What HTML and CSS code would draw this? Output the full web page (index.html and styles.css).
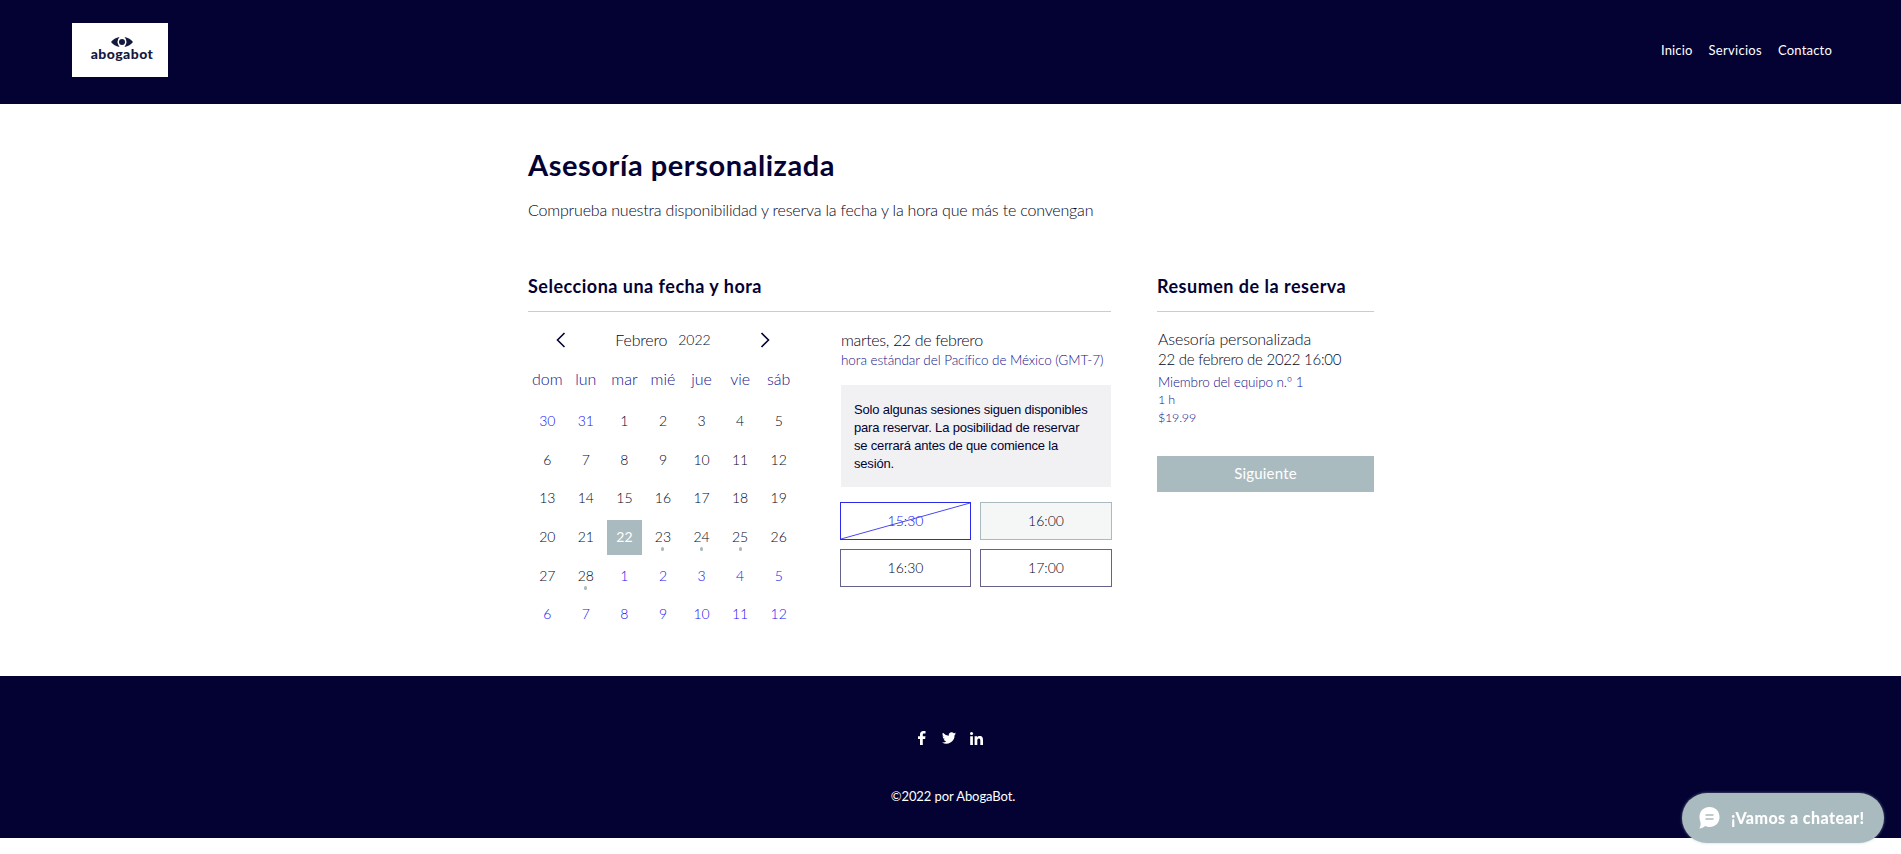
FILE: index.html
```html
<!DOCTYPE html>
<html lang="es">
<head>
<meta charset="utf-8">
<title>Asesoría personalizada</title>
<link rel="stylesheet" href="styles.css">
</head>
<body>
<header class="header">
  <a class="logo">
    <svg class="eye" viewBox="0 0 22 10" width="22" height="10"><path d="M0 5Q3 1 8.500 0Q4.500 4.500 8.500 10Q3 9 0 5ZM22 5Q19 1 13.500 0Q17.500 4.500 13.500 10Q19 9 22 5Z"/><circle cx="11" cy="5" r="3"/></svg>
    <span class="logo-text">abogabot</span>
  </a>
  <nav class="nav"><a class="nav-home">Inicio</a><a class="nav-services">Servicios</a><a class="nav-contact">Contacto</a></nav>
</header>
<main class="main">
  <h1>Asesoría personalizada</h1>
  <p class="sub">Comprueba nuestra disponibilidad y reserva la fecha y la hora que más te convengan</p>
  <div class="columns">
    <section class="picker">
      <h2>Selecciona una fecha y hora</h2>
      <div class="picker-body">
        <div class="calendar">
          <div class="month">
            <svg width="10" height="16" viewBox="0 0 10 16"><path d="M8.500 1L1.500 8L8.500 15"/></svg>
            <div class="label"><span>Febrero</span><span class="year">2022</span></div>
            <svg width="10" height="16" viewBox="0 0 10 16"><path d="M1.500 1L8.500 8L1.500 15"/></svg>
          </div>
          <div class="week"><span>dom</span><span>lun</span><span>mar</span><span>mié</span><span>jue</span><span>vie</span><span>sáb</span></div>
          <div class="days">
            <span class="out">30</span><span class="out">31</span><span>1</span><span>2</span><span>3</span><span>4</span><span>5</span>
            <span>6</span><span>7</span><span>8</span><span>9</span><span>10</span><span>11</span><span>12</span>
            <span>13</span><span>14</span><span>15</span><span>16</span><span>17</span><span>18</span><span>19</span>
            <span>20</span><span>21</span><span><b>22</b></span><span class="dot">23</span><span class="dot">24</span><span class="dot">25</span><span>26</span>
            <span>27</span><span class="dot">28</span><span class="out">1</span><span class="out">2</span><span class="out">3</span><span class="out">4</span><span class="out">5</span>
            <span class="out">6</span><span class="out">7</span><span class="out">8</span><span class="out">9</span><span class="out">10</span><span class="out">11</span><span class="out">12</span>
          </div>
        </div>
        <div class="times">
          <p class="date">martes, 22 de febrero</p>
          <p class="zone">hora estándar del Pacífico de México (GMT-7)</p>
          <div class="notice">Solo algunas sesiones siguen disponibles<br>para reservar. La posibilidad de reservar<br>se cerrará antes de que comience la<br>sesión.</div>
          <div class="slots">
            <div class="slot taken"><svg viewBox="0 0 129 36" preserveAspectRatio="none"><path d="M0 36L129 0"/></svg><span>15:30</span></div>
            <div class="slot chosen"><span>16:00</span></div>
            <div class="slot"><span>16:30</span></div>
            <div class="slot"><span>17:00</span></div>
          </div>
        </div>
      </div>
    </section>
    <aside class="summary">
      <h2>Resumen de la reserva</h2>
      <p class="big">Asesoría personalizada</p>
      <p class="big when">22 de febrero de 2022 16:00</p>
      <p class="small first">Miembro del equipo n.º 1</p>
      <p class="small numeric">1 h</p>
      <p class="small numeric">$19.99</p>
      <button class="next">Siguiente</button>
    </aside>
  </div>
</main>
<footer class="footer">
  <div class="social">
    <svg width="8" height="14" viewBox="0 0 8 14"><path d="M2 14V8H0V5.300H2V3.500C2 1.200 3.300 0 5.400 0H7.500V2.500H6C5 2.500 4.800 3 4.800 3.700V5.300H7.500L7.100 8H4.800V14Z"/></svg>
    <svg class="twitter" width="14" height="12" viewBox="0 0 24 20"><path d="M24 2.400a9.800 9.800 0 0 1-2.800.8A4.900 4.900 0 0 0 23.300.5a9.900 9.900 0 0 1-3.100 1.200A4.900 4.900 0 0 0 11.800 6.200 14 14 0 0 1 1.700 1a4.900 4.900 0 0 0 1.500 6.600A4.900 4.900 0 0 1 1 7v.1a4.900 4.900 0 0 0 4 4.800 5 5 0 0 1-2.200.1 4.900 4.900 0 0 0 4.600 3.400A9.900 9.900 0 0 1 0 17.500 14 14 0 0 0 21.500 5.100 10 10 0 0 0 24 2.400Z"/></svg>
    <svg width="13" height="13" viewBox="0 0 13 13"><path d="M.2 4.300H2.900V13H.2ZM4.600 4.300H7.200V5.500C7.700 4.600 8.600 4.100 9.800 4.100 12.500 4.100 13 5.900 13 8.200V13H10.300V8.700C10.300 7.600 10.200 6.400 8.900 6.400S7.300 7.500 7.300 8.700V13H4.600Z"/><circle cx="1.550" cy="1.550" r="1.550"/></svg>
  </div>
  <p class="copy">©2022 por AbogaBot.</p>
</footer>
<div class="chat">
  <svg width="21" height="22" viewBox="0 0 21 22"><path class="bubble" d="M10.500 0C16.500 0 20.500 4.300 20.500 10S16.500 20 10.500 20C9 20 7.500 19.700 6.200 19C4.500 20.500 2.500 21.500.3 21.500C1.300 20 1.800 18 1.500 15.500C.8 13.800.5 12 .5 10C.5 4.300 4.500 0 10.500 0Z"/><path class="lines" d="M6.500 8H14.500M6.500 12H14.500"/></svg>
  <span>¡Vamos a chatear!</span>
</div>
</body>
</html>
```
FILE: styles.css
```css
* { box-sizing: border-box; }
body { margin: 0; height: 854px; overflow: hidden; background: #fff; color: #050520; font-family: Lato, sans-serif; font-size: 16px; line-height: 24px; font-weight: 300; }
h1, h2, p { margin: 0; white-space: nowrap; }
.header { height: 104px; padding: 23px 69px 0 72px; background: #030233; display: flex; justify-content: space-between; align-items: flex-start; }
.logo { width: 96px; height: 54px; background: #fff; display: flex; flex-direction: column; align-items: center; padding-top: 14px; }
.eye { fill: #14193e; display: block; margin-left: 4px; }
.logo-text { font: 900 14px/16px Lato, sans-serif; letter-spacing: .45px; color: #14193e; margin: -1px 0 0 4px; }
.nav { display: flex; gap: 16px; padding-top: 17px; color: #fff; font-size: 13px; line-height: 20px; font-weight: 400; }
.nav-home { letter-spacing: .15px; }
.nav-services { letter-spacing: .3px; }
.nav-contact { letter-spacing: .2px; }
.main { width: 846px; height: 572px; margin: 0 527px 0 528px; padding-top: 43px; }
h1 { font-size: 29px; line-height: 36px; letter-spacing: .56px; color: #030233; }
.sub { margin-top: 15px; letter-spacing: -.18px; }
.columns { margin-top: 52px; display: grid; grid-template-columns: 583px 217px; justify-content: space-between; }
h2 { font-size: 18px; line-height: 24px; letter-spacing: .5px; color: #030233; padding-bottom: 13px; border-bottom: 1px solid #cbcbd2; }
.picker-body { display: flex; justify-content: space-between; }
.calendar { width: 270px; padding-top: 16px; }
.month { display: flex; justify-content: space-between; align-items: center; padding: 0 28px; height: 24px; }
.month svg, .taken svg { fill: none; stroke: #030233; stroke-width: 1.6; }
.label { display: flex; gap: 11px; letter-spacing: -.2px; }
.year { font-size: 14px; letter-spacing: 0; }
.week, .days { display: grid; grid-template-columns: repeat(7, 1fr); text-align: center; }
.week { margin-top: 15px; color: #12128a; }
.days { margin-top: 11px; grid-auto-rows: 38.6px; font-size: 14px; }
.days span { display: grid; place-items: center; position: relative; }
.days .out { color: #1a12f0; }
.days b { width: 35px; height: 35px; display: grid; place-items: center; background: #aabbc0; color: #fff; }
.dot::after { content: ""; position: absolute; left: 50%; bottom: 5px; width: 3px; height: 4px; margin-left: -1.5px; border-radius: 2px; background: #aabbc0; }
.times { width: 271px; padding-top: 16px; }
.date { padding-left: 1px; letter-spacing: -.35px; }
.zone { margin-top: -1px; padding-left: 1px; font-size: 13.5px; line-height: 18px; letter-spacing: -.07px; color: #12128a; }
.notice { margin: 16px 0 0 1px; height: 102px; padding: 16px 13px; background: #f1f1f4; color: #030233; font: 13px/18px "Liberation Sans", sans-serif; letter-spacing: -.18px; white-space: nowrap; }
.slots { margin: 15px -1px 0 0; display: grid; grid-template-columns: 131px 132px; gap: 9px; }
.slot { height: 38px; border: 1px solid #62628a; display: grid; place-items: center; position: relative; font-size: 14px; }
.taken { border-color: #2b2bea; color: #1a12f0; }
.taken svg { position: absolute; inset: 0; width: 100%; height: 100%; stroke: #4a48ee; stroke-width: 1; }
.chosen { border-color: #aabbc0; background: #f5f7f7; }
.summary h2 { margin-bottom: 16px; }
.big { line-height: 21px; padding-left: 1px; letter-spacing: -.14px; }
.when { font-size: 15px; letter-spacing: -.25px; }
.small { font-size: 13.5px; line-height: 18px; padding-left: 1px; letter-spacing: -.12px; color: #12128a; }
.first { margin-top: 3px; }
.numeric { font-size: 12.5px; letter-spacing: -.2px; }
.next { display: block; margin-top: 29px; width: 217px; height: 36px; border: 0; padding: 0 0 2px; background: #aabbc0; color: #fff; font: 15px Lato, sans-serif; letter-spacing: .2px; }
.footer { height: 162px; background: #030233; color: #fff; padding-top: 55px; }
.social { display: flex; justify-content: center; align-items: center; gap: 15px; height: 14px; }
.social svg { fill: #fff; }
.twitter { margin: 0 -1px 0 1px; }
.copy { text-align: center; font-size: 13px; font-weight: 400; letter-spacing: -.08px; margin-top: 39px; padding-left: 5px; }
.chat { position: fixed; left: 1682px; top: 793px; width: 202px; height: 50px; border-radius: 25px; background: #aabbc0; color: #fff; display: flex; align-items: center; gap: 11px; padding-left: 17px; box-shadow: 0 0 3px rgba(170,187,192,.6); font-weight: 900; font-size: 16px; letter-spacing: .45px; }
.bubble { fill: #fff; }
.lines { stroke: #aabbc0; stroke-width: 1.6; }
```
